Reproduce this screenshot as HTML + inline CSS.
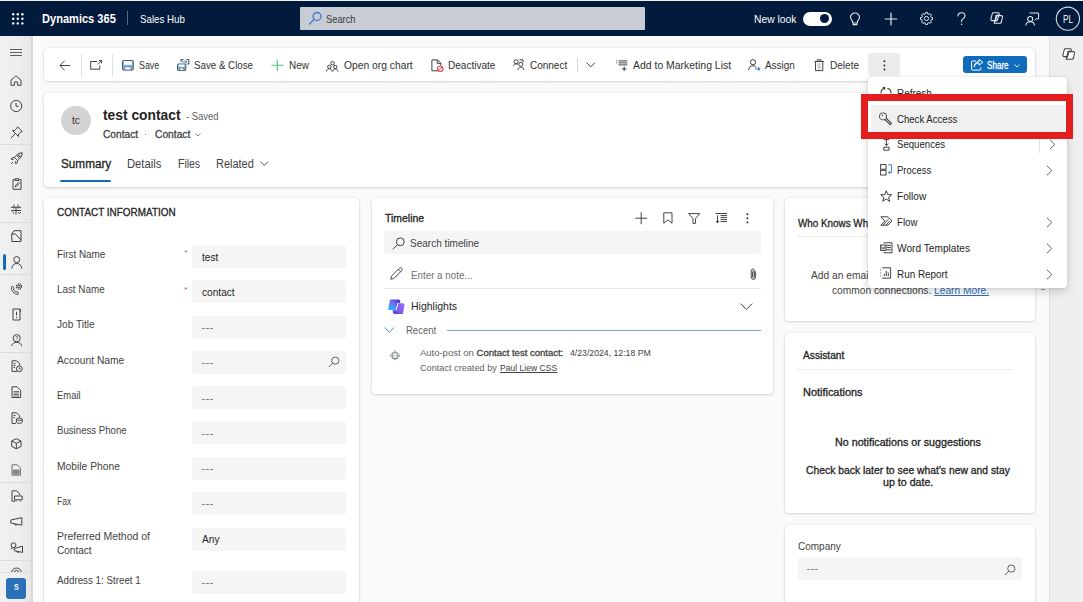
<!DOCTYPE html>
<html><head><meta charset="utf-8"><title>Dynamics 365 - Contact</title>
<style>
html,body{margin:0;padding:0;width:1083px;height:602px;overflow:hidden;background:#fafafa}
body{position:relative;font-family:"Liberation Sans",sans-serif}
.t{position:absolute;white-space:nowrap;line-height:1}
svg{overflow:visible}
</style></head><body>
<div style="position:absolute;left:0px;top:0px;width:1083px;height:602px;background:#fafafa"></div>
<div style="position:absolute;left:0px;top:0px;width:1083px;height:1px;background:#f0f0ee"></div>
<div style="position:absolute;left:0px;top:1px;width:1083px;height:35px;background:#021a3b"></div>
<div style="position:absolute;left:0px;top:36px;width:31px;height:566px;background:linear-gradient(90deg,#f0f0f0 0%,#efefef 55%,#e6e6e6 100%)"></div>
<div style="position:absolute;left:31px;top:36px;width:2px;height:566px;background:#d6d6d6"></div>
<div style="position:absolute;left:33px;top:36px;width:1px;height:566px;background:#ffffff"></div>
<div style="position:absolute;left:1050px;top:36px;width:33px;height:566px;background:#efefef"></div>
<div style="position:absolute;left:1049px;top:36px;width:1px;height:566px;background:#e0e0e0"></div>
<div style="position:absolute;left:44px;top:48px;width:991px;height:33px;background:#fff;border-radius:4px;box-shadow:0 0 2px rgba(0,0,0,0.12),0 1px 3px rgba(0,0,0,0.12)"></div>
<div style="position:absolute;left:44px;top:93px;width:1000px;height:94px;background:#fff;border-radius:4px;box-shadow:0 0 2px rgba(0,0,0,0.12),0 1px 3px rgba(0,0,0,0.12)"></div>
<div style="position:absolute;left:44px;top:198px;width:315px;height:420px;background:#fff;border-radius:4px;box-shadow:0 0 2px rgba(0,0,0,0.12),0 1px 3px rgba(0,0,0,0.12)"></div>
<div style="position:absolute;left:372px;top:198px;width:401px;height:196px;background:#fff;border-radius:4px;box-shadow:0 0 2px rgba(0,0,0,0.12),0 1px 3px rgba(0,0,0,0.12)"></div>
<div style="position:absolute;left:785px;top:198px;width:250px;height:123px;background:#fff;border-radius:4px;box-shadow:0 0 2px rgba(0,0,0,0.12),0 1px 3px rgba(0,0,0,0.12)"></div>
<div style="position:absolute;left:785px;top:333px;width:250px;height:180px;background:#fff;border-radius:4px;box-shadow:0 0 2px rgba(0,0,0,0.12),0 1px 3px rgba(0,0,0,0.12)"></div>
<div style="position:absolute;left:785px;top:525px;width:250px;height:100px;background:#fff;border-radius:4px;box-shadow:0 0 2px rgba(0,0,0,0.12),0 1px 3px rgba(0,0,0,0.12)"></div>
<svg style="position:absolute;left:12px;top:13px;" width="12" height="12" viewBox="0 0 12 12" fill="none"><circle cx="1.2" cy="1.2" r="1.2" fill="#fff"/><circle cx="1.2" cy="5.8" r="1.2" fill="#fff"/><circle cx="1.2" cy="10.4" r="1.2" fill="#fff"/><circle cx="5.8" cy="1.2" r="1.2" fill="#fff"/><circle cx="5.8" cy="5.8" r="1.2" fill="#fff"/><circle cx="5.8" cy="10.4" r="1.2" fill="#fff"/><circle cx="10.4" cy="1.2" r="1.2" fill="#fff"/><circle cx="10.4" cy="5.8" r="1.2" fill="#fff"/><circle cx="10.4" cy="10.4" r="1.2" fill="#fff"/></svg>
<div class="t" style="left:41.50px;top:13px;font-size:12px;font-weight:700;color:#fff;transform:scaleX(0.9219);transform-origin:0 0;">Dynamics 365</div>
<div style="position:absolute;left:127px;top:11px;width:1px;height:14px;background:#5a6a85"></div>
<div class="t" style="left:140.20px;top:14px;font-size:11px;font-weight:400;color:#fff;transform:scaleX(0.8827);transform-origin:0 0;">Sales Hub</div>
<div style="position:absolute;left:300px;top:7px;width:345px;height:23px;background:#c8ccd4;border-radius:1px"></div>
<svg style="position:absolute;left:308px;top:11px;" width="14" height="14" viewBox="0 0 14 14" fill="none"><circle cx="9" cy="5.5" r="4" stroke="#3f7fd0" stroke-width="1.3"/><path d="M6.2 8.3 L1.5 13" stroke="#3f7fd0" stroke-width="1.3" stroke-linecap="round"/></svg>
<div class="t" style="left:326.20px;top:14px;font-size:11px;font-weight:400;color:#3b3b3b;transform:scaleX(0.8465);transform-origin:0 0;">Search</div>
<div class="t" style="left:753.90px;top:14px;font-size:11px;font-weight:400;color:#fff;transform:scaleX(0.9367);transform-origin:0 0;">New look</div>
<div style="position:absolute;left:803px;top:12px;width:28.5px;height:13.5px;background:#fff;border-radius:7px"></div>
<div style="position:absolute;left:820px;top:14.2px;width:9px;height:9px;background:#021a3b;border-radius:50%"></div>
<svg style="position:absolute;left:849px;top:12px;" width="12" height="14" viewBox="0 0 12 14" fill="none"><path d="M6 1 C3.2 1 1.5 3 1.5 5.3 C1.5 7 2.5 8 3.5 9.2 L3.8 11 L8.2 11 L8.5 9.2 C9.5 8 10.5 7 10.5 5.3 C10.5 3 8.8 1 6 1 Z" stroke="#e8e8ec" stroke-width="1.1"/><path d="M4 11.3 L4.2 12.6 L7.8 12.6 L8 11.3" stroke="#e8e8ec" stroke-width="1.1"/></svg>
<svg style="position:absolute;left:884px;top:12px;" width="14" height="14" viewBox="0 0 14 14" fill="none"><path d="M7 0.8 V13.2 M0.8 7 H13.2" stroke="#e8e8ec" stroke-width="1.2"/></svg>
<svg style="position:absolute;left:919.5px;top:12px;" width="13" height="13" viewBox="0 0 13 13" fill="none"><polygon points="10.90,5.16 12.52,5.55 12.52,7.45 10.90,7.84 10.56,8.66 11.44,10.09 10.09,11.44 8.66,10.56 7.84,10.90 7.45,12.52 5.55,12.52 5.16,10.90 4.34,10.56 2.91,11.44 1.56,10.09 2.44,8.66 2.10,7.84 0.48,7.45 0.48,5.55 2.10,5.16 2.44,4.34 1.56,2.91 2.91,1.56 4.34,2.44 5.16,2.10 5.55,0.48 7.45,0.48 7.84,2.10 8.66,2.44 10.09,1.56 11.44,2.91 10.56,4.34" stroke="#e8e8ec" stroke-width="1" stroke-linejoin="round"/><circle cx="6.5" cy="6.5" r="2.1" stroke="#e8e8ec" stroke-width="1"/></svg>
<svg style="position:absolute;left:956px;top:12px;" width="11" height="14" viewBox="0 0 11 14" fill="none"><path d="M2 4 C2 1.8 3.8 0.8 5.5 0.8 C7.4 0.8 9 2 9 3.8 C9 5.6 7.6 6.2 6.5 7.2 C5.8 7.8 5.6 8.5 5.6 9.6" stroke="#e8e8ec" stroke-width="1.1" stroke-linecap="round"/><circle cx="5.6" cy="12.2" r="0.8" fill="#e8e8ec"/></svg>
<svg style="position:absolute;left:990.2px;top:12px;" width="14" height="13" viewBox="0 0 14 13" fill="none"><path d="M3.2 0.8 H8.3 C9 0.8 9.4 1.4 9.2 2 L7.2 8.6 H2 C1.2 8.6 0.7 8 0.9 7.2 L2.3 1.6 C2.4 1.1 2.8 0.8 3.2 0.8 Z" stroke="#e8e8ec" stroke-width="1.05" fill="none"/><path d="M6 3.6 H11.4 C12.2 3.6 12.7 4.2 12.5 5 L11.4 10 C11.2 10.7 10.7 11.2 10 11.2 H4.3 L6 3.6 Z" stroke="#e8e8ec" stroke-width="1.05" fill="none"/><path d="M7.3 2.5 L5.3 9.8" stroke="#e8e8ec" stroke-width="1"/></svg>
<svg style="position:absolute;left:1025px;top:12px;" width="15" height="14" viewBox="0 0 15 14" fill="none"><path d="M4.6 1 H13.6 V6.8 H11.2 L9.6 8.4" stroke="#e8e8ec" stroke-width="1"/><circle cx="5.2" cy="7" r="2.5" stroke="#e8e8ec" stroke-width="1.05"/><path d="M1 13.5 C1 11 2.8 9.8 5.2 9.8 C7.6 9.8 9.4 11 9.4 13.5" stroke="#e8e8ec" stroke-width="1.05"/></svg>
<svg style="position:absolute;left:1055px;top:6px;" width="26" height="26" viewBox="0 0 26 26" fill="none"><circle cx="12.9" cy="12.7" r="11.6" stroke="#d8dbe2" stroke-width="1.1"/></svg>
<div class="t" style="left:1062.80px;top:14px;font-size:11px;font-weight:400;color:#fff;transform:scaleX(0.7433);transform-origin:0 0;">PL</div>
<svg style="position:absolute;left:10px;top:48px;" width="12" height="9" viewBox="0 0 12 9" fill="none"><path d="M0 1.5 H12 M0 4.5 H12 M0 7.5 H12" stroke="#616161" stroke-width="1"/></svg>
<svg style="position:absolute;left:10px;top:74.5px;" width="12" height="11" viewBox="0 0 12 11" fill="none"><path d="M1 5 L6 0.8 L11 5 V10.3 H7.6 V7 H4.4 V10.3 H1 Z" stroke="#424242" stroke-width="1" fill="none"/></svg>
<svg style="position:absolute;left:10px;top:99.8px;" width="13" height="13" viewBox="0 0 13 13" fill="none"><circle cx="6.2" cy="6" r="5.6" stroke="#424242" stroke-width="1" fill="none"/><path d="M6 2.8 V6.3 H8.6" stroke="#424242" stroke-width="1" fill="none"/></svg>
<svg style="position:absolute;left:9.5px;top:125.5px;" width="13" height="13" viewBox="0 0 13 13" fill="none"><path d="M7.5 0.8 L12.2 5.5 L10.8 6 L8.5 8.3 L8.5 10.5 L2.5 4.5 L4.7 4.5 L7 2.2 Z M5.2 7.8 L0.8 12.2" stroke="#424242" stroke-width="1" fill="none"/></svg>
<div style="position:absolute;left:0px;top:144px;width:31px;height:1px;background:#dcdcdc"></div>
<svg style="position:absolute;left:9.5px;top:151.5px;" width="13" height="13" viewBox="0 0 13 13" fill="none"><path d="M12.2 0.8 C9 0.8 6.5 2.5 4.5 5.5 L7.5 8.5 C10.5 6.5 12.2 4 12.2 0.8 Z" stroke="#424242" stroke-width="1" fill="none"/><circle cx="8.8" cy="4.2" r="1.1" stroke="#424242" stroke-width="1" fill="none"/><path d="M4.5 5.5 L2.2 5.8 L1.2 7.2 L3.6 7.6 M7.5 8.5 L7.2 10.8 L5.8 11.8 L5.4 9.4 M3 10 L1 12" stroke="#424242" stroke-width="1" fill="none"/></svg>
<svg style="position:absolute;left:11.5px;top:178px;" width="10" height="12" viewBox="0 0 10 12" fill="none"><path d="M2.5 1.5 H1 V11.3 H9 V1.5 H7.5 M3 0.7 H7 V2.5 H3 Z M3.3 9 L3.6 7.3 L6.6 4.3 L7.6 5.3 L4.6 8.3 Z" stroke="#424242" stroke-width="1" fill="none"/></svg>
<svg style="position:absolute;left:10px;top:204px;" width="12" height="11" viewBox="0 0 12 11" fill="none"><path d="M1 3.3 H11 M1 6.5 H11 M4 0.7 V4.5 M8 0.7 V4.5 M6 4 V10.5 M2.5 8 L4.2 9.6 M8 8.5 L9.5 9.5 L11 8" stroke="#424242" stroke-width="1" fill="none"/></svg>
<div style="position:absolute;left:0px;top:222px;width:31px;height:1px;background:#dcdcdc"></div>
<svg style="position:absolute;left:10.5px;top:229.8px;" width="12" height="12.5" viewBox="0 0 12 12.5" fill="none"><path d="M3 0.7 H10 V11.5 H0.8 V4 L4.5 4 L10 10" stroke="#424242" stroke-width="1" fill="none"/><path d="M0.8 4 L3 0.7" stroke="#424242" stroke-width="1" fill="none"/></svg>
<div style="position:absolute;left:3.3px;top:254px;width:2.5px;height:15.5px;background:#0f6cbd;border-radius:2px"></div>
<svg style="position:absolute;left:10.5px;top:255.5px;" width="12" height="13" viewBox="0 0 12 13" fill="none"><circle cx="5.7" cy="3.6" r="3" stroke="#424242" stroke-width="1" fill="none"/><path d="M0.8 12.5 C1.2 9 3 7.5 5.7 7.5 C8.4 7.5 10.2 9 10.8 12.5" stroke="#424242" stroke-width="1" fill="none"/></svg>
<div style="position:absolute;left:0px;top:274px;width:31px;height:1px;background:#dcdcdc"></div>
<svg style="position:absolute;left:10px;top:283px;" width="13" height="12" viewBox="0 0 13 12" fill="none"><path d="M2.2 3 C0.4 4.5 1.5 8 4 10 C6 11.6 8 11.8 8.8 10.6 L7.2 8.6 L6 9.2 C4.8 8.4 3.8 7.2 3.4 6 L4.2 5 Z" stroke="#424242" stroke-width="1" fill="none"/><circle cx="9" cy="3.5" r="1.3" stroke="#424242" stroke-width="1" fill="none"/><circle cx="9" cy="3.5" r="2.6" stroke="#424242" stroke-width="1.3" stroke-dasharray="1.2 0.9" fill="none"/></svg>
<svg style="position:absolute;left:11.5px;top:307.5px;" width="10.5" height="13" viewBox="0 0 10.5 13" fill="none"><path d="M1 1 H8 V12 H1 Z M8.5 1 V3.8" stroke="#424242" stroke-width="1" fill="none"/><path d="M4.5 3.8 V7.6 M4.5 9 V10" stroke="#424242" stroke-width="1" fill="none"/></svg>
<svg style="position:absolute;left:10.5px;top:334px;" width="12" height="12.5" viewBox="0 0 12 12.5" fill="none"><circle cx="5.7" cy="4.2" r="3.6" stroke="#424242" stroke-width="1" fill="none"/><path d="M0.8 12 C1.3 9.5 3 8.3 5.7 8.3 C8.4 8.3 10.1 9.5 10.6 12" stroke="#424242" stroke-width="1" fill="none"/><path d="M4.6 3.2 C4.8 2.2 6.8 2.2 6.8 3.4 C6.8 4.2 5.7 4.4 5.7 5.4" stroke="#424242" stroke-width="0.8" fill="none"/></svg>
<div style="position:absolute;left:0px;top:352px;width:31px;height:1px;background:#dcdcdc"></div>
<svg style="position:absolute;left:10.5px;top:360.3px;" width="12" height="12.5" viewBox="0 0 12 12.5" fill="none"><path d="M6 11.4 H1 V0.8 H5.6 L8.6 3.8 V5.5" stroke="#424242" stroke-width="1" fill="none"/><circle cx="8.3" cy="8.8" r="2.9" stroke="#424242" stroke-width="1" fill="none"/><path d="M2.5 3.5 H4.5 M2.5 5.5 H4.5 M2.5 7.5 H4 M8.3 7.5 V9 H9.5" stroke="#424242" stroke-width="1" fill="none"/></svg>
<svg style="position:absolute;left:11px;top:385.8px;" width="10.5" height="12.5" viewBox="0 0 10.5 12.5" fill="none"><path d="M1 0.8 H6 L9.6 4.4 V11.5 H1 Z" stroke="#424242" stroke-width="1" fill="none"/><path d="M2.5 5.5 H8 M2.5 7 H8 M2.5 8.5 H8 M2.5 10 H8" stroke="#616161" stroke-width="0.9"/></svg>
<svg style="position:absolute;left:10.5px;top:411.5px;" width="12" height="12.5" viewBox="0 0 12 12.5" fill="none"><path d="M5 11.4 H1 V0.8 H5.6 L8.6 3.8 V5.5" stroke="#424242" stroke-width="1" fill="none"/><ellipse cx="8.3" cy="7.2" rx="2.9" ry="1.2" stroke="#424242" stroke-width="1" fill="none"/><path d="M5.4 7.2 V10.2 C5.4 11.6 11.2 11.6 11.2 10.2 V7.2" stroke="#424242" stroke-width="1" fill="none"/><path d="M2.5 3.5 H4.5 M2.5 5.5 H4" stroke="#424242" stroke-width="1" fill="none"/></svg>
<svg style="position:absolute;left:10.5px;top:437.8px;" width="11" height="11.5" viewBox="0 0 11 11.5" fill="none"><path d="M5.3 0.7 L10 3 V8.5 L5.3 10.8 L0.7 8.5 V3 Z M0.7 3 L5.3 5.3 L10 3 M5.3 5.3 V10.8" stroke="#424242" stroke-width="1" fill="none"/></svg>
<svg style="position:absolute;left:11px;top:463.5px;" width="10.5" height="12" viewBox="0 0 10.5 12" fill="none"><path d="M1 0.8 H6 L9.4 4 V11.2 H1 Z" stroke="#6e6e6e" stroke-width="1" fill="none"/><path d="M2.5 6 H8 V10 H2.5 Z M5 6 V10 M2.5 8 H8" stroke="#6e6e6e" stroke-width="0.9" fill="#b8b8b8"/></svg>
<div style="position:absolute;left:0px;top:482px;width:31px;height:1px;background:#dcdcdc"></div>
<svg style="position:absolute;left:10.5px;top:489.7px;" width="12" height="12.5" viewBox="0 0 12 12.5" fill="none"><path d="M4 11.2 H1 V0.8 H5.6 L8.6 3.8 V5" stroke="#424242" stroke-width="1" fill="none"/><path d="M3.5 6 H11.2 V9.8 H3.5 Z M5 10.5 V11.6 M9.6 10.5 V11.6" stroke="#424242" stroke-width="1" fill="none"/></svg>
<svg style="position:absolute;left:9.8px;top:517px;" width="13" height="9.5" viewBox="0 0 13 9.5" fill="none"><path d="M0.8 3 L11.8 0.7 V8.2 L0.8 6 Z M4.5 6.8 C4.5 8.5 7 8.5 7 7.3" stroke="#424242" stroke-width="1" fill="none"/></svg>
<svg style="position:absolute;left:9.5px;top:541.8px;" width="13.5" height="11.5" viewBox="0 0 13.5 11.5" fill="none"><circle cx="3.5" cy="3.2" r="2.4" stroke="#424242" stroke-width="1" fill="none"/><path d="M0.8 7.5 C1 6.3 2 5.8 3.5 5.8 M4.2 6.5 L12.5 4.2 V10.4 L4.2 8.7 Z M6.5 9.2 C6.5 10.8 9 10.8 9 9.6" stroke="#424242" stroke-width="1" fill="none"/></svg>
<div style="position:absolute;left:0px;top:560px;width:31px;height:1px;background:#dcdcdc"></div>
<svg style="position:absolute;left:10.5px;top:567px;" width="11" height="5" viewBox="0 0 11 5" fill="none"><circle cx="5.5" cy="6" r="5" stroke="#424242" stroke-width="1" fill="none"/><circle cx="5.5" cy="6" r="2.6" stroke="#424242" stroke-width="1" fill="none"/></svg>
<div style="position:absolute;left:0px;top:572px;width:31px;height:30px;background:linear-gradient(90deg,#f0f0f0 0%,#efefef 55%,#e6e6e6 100%);border-top:1px solid #e0e0e0;box-sizing:border-box"></div>
<div style="position:absolute;left:6px;top:578px;width:19.8px;height:20.5px;background:#2b70b7;border-radius:3px"></div>
<div class="t" style="left:13.80px;top:582px;font-size:9.5px;font-weight:700;color:#fff;transform:scaleX(0.7417);transform-origin:0 0;">S</div>
<svg style="position:absolute;left:59px;top:59.5px;" width="12" height="11" viewBox="0 0 12 11" fill="none"><path d="M11.2 5.5 H1 M5.6 0.8 L0.9 5.5 L5.6 10.2" stroke="#424242" stroke-width="1" fill="none"/></svg>
<div style="position:absolute;left:80.5px;top:53.5px;width:1px;height:23px;background:#e0e0e0"></div>
<svg style="position:absolute;left:90px;top:60px;" width="13" height="10" viewBox="0 0 13 10" fill="none"><path d="M7 1.5 H0.7 V9.2 H9.8 V5.5 M8.8 0.6 H11.6 V3.4 M11.5 0.7 L7.8 4.4" stroke="#424242" stroke-width="1" fill="none"/></svg>
<div style="position:absolute;left:112px;top:53.5px;width:1px;height:23px;background:#e0e0e0"></div>
<svg style="position:absolute;left:121.5px;top:59.8px;" width="12" height="10.5" viewBox="0 0 12 10.5" fill="none"><rect x="0.5" y="0.5" width="10.8" height="9.5" rx="0.8" fill="#7ab6ea" stroke="#4a5a6a" stroke-width="1"/><rect x="2" y="1" width="7.8" height="3.8" fill="#fff"/><rect x="2.8" y="6.8" width="6.2" height="3.2" fill="#f4f4f4" stroke="#4a5a6a" stroke-width="0.6"/></svg>
<div class="t" style="left:138.80px;top:60px;font-size:11px;font-weight:400;color:#303030;transform:scaleX(0.8018);transform-origin:0 0;">Save</div>
<svg style="position:absolute;left:176.8px;top:59px;" width="12.5" height="12" viewBox="0 0 12.5 12" fill="none"><path d="M6.5 0.6 H4 V3 M9.5 0.6 H11.8 V5 H10.2" stroke="#3a3a3a" stroke-width="1" fill="none"/><path d="M5.4 2.9 H9.6 M8.2 1.5 L9.8 2.9 L8.2 4.3" stroke="#2f7fd0" stroke-width="1" fill="none"/><rect x="0.5" y="5" width="8.3" height="6.5" rx="0.7" fill="#7ab6ea" stroke="#4a5a6a" stroke-width="1"/><rect x="1.8" y="5.5" width="5.6" height="2.3" fill="#fff"/><rect x="2.3" y="9" width="4.6" height="2.3" fill="#f0f0f0" stroke="#4a5a6a" stroke-width="0.6"/></svg>
<div class="t" style="left:194.00px;top:60px;font-size:11px;font-weight:400;color:#303030;transform:scaleX(0.8852);transform-origin:0 0;">Save &amp; Close</div>
<svg style="position:absolute;left:270.5px;top:59px;" width="13" height="12.5" viewBox="0 0 13 12.5" fill="none"><path d="M6.3 0.5 V12 M0.5 6.2 H12.5" stroke="#4cc27e" stroke-width="1.1"/></svg>
<div class="t" style="left:288.70px;top:60px;font-size:11px;font-weight:400;color:#303030;transform:scaleX(0.9032);transform-origin:0 0;">New</div>
<svg style="position:absolute;left:326px;top:60.5px;" width="12.5" height="10.8" viewBox="0 0 12.5 10.8" fill="none"><circle cx="6.5" cy="2.2" r="1.7" stroke="#424242" stroke-width="1" fill="none"/><circle cx="3.3" cy="5.8" r="1.7" stroke="#424242" stroke-width="1" fill="none"/><circle cx="9.3" cy="6" r="1.7" stroke="#424242" stroke-width="1" fill="none"/><path d="M0.5 10.5 C1 8.5 2 7.8 3.3 7.8 C4.6 7.8 5.6 8.5 6 10.5 M6.8 10.5 C7.2 8.5 8 8 9.3 8 C10.6 8 11.6 8.7 12 10.5 M4.6 4.6 L5.2 3.6 M7.8 3.6 L8.4 4.7" stroke="#424242" stroke-width="1" fill="none"/></svg>
<div class="t" style="left:343.60px;top:60px;font-size:11px;font-weight:400;color:#303030;transform:scaleX(0.9364);transform-origin:0 0;">Open org chart</div>
<svg style="position:absolute;left:430.5px;top:58.5px;" width="13" height="13" viewBox="0 0 13 13" fill="none"><path d="M8 11.8 H0.9 V0.9 H6.5 L9.8 4.2 V6.8 M6.3 0.9 V4.4 H9.8" stroke="#424242" stroke-width="1" fill="none"/><circle cx="9.2" cy="9.7" r="2.7" fill="#fff" stroke="#e34850" stroke-width="1.2"/><path d="M7.4 11.4 L11 8" stroke="#e34850" stroke-width="1"/></svg>
<div class="t" style="left:447.50px;top:60px;font-size:11px;font-weight:400;color:#303030;transform:scaleX(0.9120);transform-origin:0 0;">Deactivate</div>
<svg style="position:absolute;left:513.3px;top:59.3px;" width="11" height="11.5" viewBox="0 0 11 11.5" fill="none"><circle cx="3.2" cy="2.7" r="2" stroke="#424242" stroke-width="1" fill="none"/><path d="M0.5 6.8 C0.8 5.5 1.8 5 3.2 5 C4 5 4.6 5.2 5 5.6" stroke="#424242" stroke-width="1" fill="none"/><circle cx="7.8" cy="5.3" r="2" stroke="#424242" stroke-width="1" fill="none"/><path d="M4.8 11 C5 9 6.2 8.2 7.8 8.2 C9.4 8.2 10.6 9 10.8 11 M6.5 0.8 H10 V3.3" stroke="#424242" stroke-width="1" fill="none"/></svg>
<div class="t" style="left:529.90px;top:60px;font-size:11px;font-weight:400;color:#303030;transform:scaleX(0.9079);transform-origin:0 0;">Connect</div>
<div style="position:absolute;left:576.5px;top:58px;width:1px;height:13.5px;background:#d6d6d6"></div>
<svg style="position:absolute;left:585.5px;top:62px;" width="9.5" height="6" viewBox="0 0 9.5 6" fill="none"><path d="M0.6 0.6 L4.75 4.9 L8.9 0.6" stroke="#424242" stroke-width="1" fill="none"/></svg>
<svg style="position:absolute;left:615.8px;top:60px;" width="12" height="11.5" viewBox="0 0 12 11.5" fill="none"><path d="M0.3 0.9 H1.2 M0.3 2.9 H1.2 M2.5 0.9 H11.3 M2.5 2.9 H11.3 M2.5 4.9 H11.3 M8.2 6.5 V11.2 M5.9 8.9 H10.6" stroke="#424242" stroke-width="1" fill="none"/></svg>
<div class="t" style="left:632.60px;top:60px;font-size:11px;font-weight:400;color:#303030;transform:scaleX(0.9493);transform-origin:0 0;">Add to Marketing List</div>
<svg style="position:absolute;left:747.8px;top:58.8px;" width="13" height="12" viewBox="0 0 13 12" fill="none"><circle cx="5" cy="3.2" r="2.6" stroke="#424242" stroke-width="1" fill="none"/><path d="M0.6 11 C1 8 2.6 6.8 5 6.8 C6.5 6.8 7.6 7.4 8.3 8.6" stroke="#424242" stroke-width="1" fill="none"/><path d="M6.8 10 H11.8 M10.1 8.4 L11.9 10 L10.1 11.6" stroke="#2f7fd0" stroke-width="1.1"/></svg>
<div class="t" style="left:765.30px;top:60px;font-size:11px;font-weight:400;color:#303030;transform:scaleX(0.9027);transform-origin:0 0;">Assign</div>
<svg style="position:absolute;left:813.5px;top:59px;" width="10.5" height="12.5" viewBox="0 0 10.5 12.5" fill="none"><path d="M0.5 2.5 H9.8 M3.3 2.3 V0.8 H7 V2.3 M1.5 2.5 V11.6 H8.8 V2.5" stroke="#424242" stroke-width="1" fill="none"/><rect x="3.5" y="4" width="3.3" height="6.3" fill="#d0d0d0"/></svg>
<div class="t" style="left:830.00px;top:60px;font-size:11px;font-weight:400;color:#303030;transform:scaleX(0.9151);transform-origin:0 0;">Delete</div>
<div style="position:absolute;left:868.2px;top:53.3px;width:32px;height:23px;background:#ebebeb;border-radius:3px"></div>
<svg style="position:absolute;left:883px;top:59.5px;" width="3" height="11" viewBox="0 0 3 11" fill="none"><circle cx="1.4" cy="1.3" r="0.95" fill="#242424"/><circle cx="1.4" cy="5.4" r="0.95" fill="#242424"/><circle cx="1.4" cy="9.5" r="0.95" fill="#242424"/></svg>
<div style="position:absolute;left:963px;top:56.4px;width:64.2px;height:17px;background:#0f6cbd;border-radius:3px"></div>
<svg style="position:absolute;left:970.5px;top:59px;" width="13" height="12" viewBox="0 0 13 12" fill="none"><path d="M5 2 H1.5 C1 2 0.6 2.4 0.6 2.9 V10.2 C0.6 10.7 1 11.1 1.5 11.1 H9 C9.5 11.1 9.9 10.7 9.9 10.2 V8.5 M3.2 8 C3.5 5.5 5.4 4 8 4 V6.2 L11.9 3.3 L8 0.5 V2.5 C5 2.5 3.2 5 3.2 8 Z" stroke="#fff" stroke-width="1" fill="none" stroke-linejoin="round"/></svg>
<div class="t" style="left:987.00px;top:60px;font-size:10.5px;font-weight:400;color:#fff;transform:scaleX(0.7710);transform-origin:0 0;-webkit-text-stroke:0.3px #fff;">Share</div>
<svg style="position:absolute;left:1013.8px;top:63.5px;" width="6" height="4" viewBox="0 0 6 4" fill="none"><path d="M0.5 0.5 L3 3 L5.5 0.5" stroke="#fff" stroke-width="0.9" fill="none"/></svg>
<svg style="position:absolute;left:1061.5px;top:48px;" width="14" height="13" viewBox="0 0 14 13" fill="none"><path d="M3.2 0.8 H8.3 C9 0.8 9.4 1.4 9.2 2 L7.2 8.6 H2 C1.2 8.6 0.7 8 0.9 7.2 L2.3 1.6 C2.4 1.1 2.8 0.8 3.2 0.8 Z" stroke="#424242" stroke-width="1.05" fill="#fff"/><path d="M6 3.6 H11.4 C12.2 3.6 12.7 4.2 12.5 5 L11.4 10 C11.2 10.7 10.7 11.2 10 11.2 H4.3 L6 3.6 Z" stroke="#424242" stroke-width="1.05" fill="#fff"/><path d="M7.3 2.5 L5.3 9.8" stroke="#424242" stroke-width="1"/></svg>
<div style="position:absolute;left:61px;top:105.5px;width:29.8px;height:29.5px;background:#d6d4d2;border-radius:50%"></div>
<div class="t" style="left:72.00px;top:115px;font-size:11px;font-weight:400;color:#323130;transform:scaleX(0.9114);transform-origin:0 0;">tc</div>
<div class="t" style="left:102.60px;top:108px;font-size:14px;font-weight:700;color:#242424;transform:scaleX(0.9864);transform-origin:0 0;">test contact</div>
<div class="t" style="left:185.80px;top:112px;font-size:10px;font-weight:400;color:#616161;transform:scaleX(0.9431);transform-origin:0 0;">- Saved</div>
<div class="t" style="left:102.60px;top:129px;font-size:11px;font-weight:400;color:#424242;transform:scaleX(0.9260);transform-origin:0 0;-webkit-text-stroke:0.3px #424242;">Contact</div>
<div style="position:absolute;left:144.8px;top:134px;width:1.3px;height:1.3px;background:#616161;border-radius:50%"></div>
<div class="t" style="left:155.00px;top:129px;font-size:11px;font-weight:400;color:#424242;transform:scaleX(0.9313);transform-origin:0 0;-webkit-text-stroke:0.3px #424242;">Contact</div>
<svg style="position:absolute;left:195.3px;top:133.3px;" width="6" height="4" viewBox="0 0 6 4" fill="none"><path d="M0.5 0.5 L3 3 L5.5 0.5" stroke="#616161" stroke-width="0.8" fill="none"/></svg>
<div class="t" style="left:60.70px;top:158px;font-size:12px;font-weight:400;color:#242424;transform:scaleX(0.9779);transform-origin:0 0;-webkit-text-stroke:0.3px #242424;">Summary</div>
<div class="t" style="left:126.70px;top:158px;font-size:12px;font-weight:400;color:#424242;transform:scaleX(0.9350);transform-origin:0 0;">Details</div>
<div class="t" style="left:177.50px;top:158px;font-size:12px;font-weight:400;color:#424242;transform:scaleX(0.8724);transform-origin:0 0;">Files</div>
<div class="t" style="left:215.90px;top:158px;font-size:12px;font-weight:400;color:#424242;transform:scaleX(0.9138);transform-origin:0 0;">Related</div>
<svg style="position:absolute;left:260.3px;top:160.5px;" width="8.5" height="5.5" viewBox="0 0 8.5 5.5" fill="none"><path d="M0.5 0.6 L4.25 4.5 L8 0.6" stroke="#424242" stroke-width="0.9" fill="none"/></svg>
<div style="position:absolute;left:60.2px;top:179.5px;width:51.2px;height:2.6px;background:#0f6cbd;border-radius:2px"></div>
<div class="t" style="left:56.90px;top:207px;font-size:11px;font-weight:400;color:#242424;transform:scaleX(0.9027);transform-origin:0 0;-webkit-text-stroke:0.3px #242424;">CONTACT INFORMATION</div>
<div style="position:absolute;left:192.2px;top:245.0px;width:153.8px;height:23.2px;background:#f5f5f5;border-radius:3px"></div>
<div class="t" style="left:57.00px;top:249px;font-size:11px;font-weight:400;color:#424242;transform:scaleX(0.8981);transform-origin:0 0;">First Name</div>
<div class="t" style="left:201.90px;top:252px;font-size:11px;font-weight:400;color:#242424;transform:scaleX(0.9200);transform-origin:0 0;">test</div>
<div style="position:absolute;left:192.2px;top:280.1px;width:153.8px;height:23.2px;background:#f5f5f5;border-radius:3px"></div>
<div class="t" style="left:57.00px;top:284px;font-size:11px;font-weight:400;color:#424242;transform:scaleX(0.8950);transform-origin:0 0;">Last Name</div>
<div class="t" style="left:201.90px;top:287px;font-size:11px;font-weight:400;color:#242424;transform:scaleX(0.9200);transform-origin:0 0;">contact</div>
<div style="position:absolute;left:192.2px;top:315.6px;width:153.8px;height:23.2px;background:#f5f5f5;border-radius:3px"></div>
<div class="t" style="left:57.00px;top:319px;font-size:11px;font-weight:400;color:#424242;transform:scaleX(0.9179);transform-origin:0 0;">Job Title</div>
<div style="position:absolute;left:202px;top:328px;width:3px;height:1px;background:#8a8a8a"></div>
<div style="position:absolute;left:206px;top:328px;width:3px;height:1px;background:#8a8a8a"></div>
<div style="position:absolute;left:210px;top:328px;width:3px;height:1px;background:#8a8a8a"></div>
<div style="position:absolute;left:192.2px;top:350.8px;width:153.8px;height:23.2px;background:#f5f5f5;border-radius:3px"></div>
<div class="t" style="left:57.00px;top:355px;font-size:11px;font-weight:400;color:#424242;transform:scaleX(0.9328);transform-origin:0 0;">Account Name</div>
<div style="position:absolute;left:202px;top:363px;width:3px;height:1px;background:#8a8a8a"></div>
<div style="position:absolute;left:206px;top:363px;width:3px;height:1px;background:#8a8a8a"></div>
<div style="position:absolute;left:210px;top:363px;width:3px;height:1px;background:#8a8a8a"></div>
<svg style="position:absolute;left:328.3px;top:356.3px;" width="12" height="12" viewBox="0 0 12 12" fill="none"><circle cx="7.3" cy="4.6" r="3.6" stroke="#616161" stroke-width="1" fill="none"/><path d="M4.7 7.2 L0.8 11.1" stroke="#616161" stroke-width="1"/></svg>
<div style="position:absolute;left:192.2px;top:386.3px;width:153.8px;height:23.2px;background:#f5f5f5;border-radius:3px"></div>
<div class="t" style="left:57.00px;top:390px;font-size:11px;font-weight:400;color:#424242;transform:scaleX(0.8578);transform-origin:0 0;">Email</div>
<div style="position:absolute;left:202px;top:399px;width:3px;height:1px;background:#8a8a8a"></div>
<div style="position:absolute;left:206px;top:399px;width:3px;height:1px;background:#8a8a8a"></div>
<div style="position:absolute;left:210px;top:399px;width:3px;height:1px;background:#8a8a8a"></div>
<div style="position:absolute;left:192.2px;top:421.3px;width:153.8px;height:23.2px;background:#f5f5f5;border-radius:3px"></div>
<div class="t" style="left:57.00px;top:425px;font-size:11px;font-weight:400;color:#424242;transform:scaleX(0.8768);transform-origin:0 0;">Business Phone</div>
<div style="position:absolute;left:202px;top:434px;width:3px;height:1px;background:#8a8a8a"></div>
<div style="position:absolute;left:206px;top:434px;width:3px;height:1px;background:#8a8a8a"></div>
<div style="position:absolute;left:210px;top:434px;width:3px;height:1px;background:#8a8a8a"></div>
<div style="position:absolute;left:192.2px;top:456.7px;width:153.8px;height:23.2px;background:#f5f5f5;border-radius:3px"></div>
<div class="t" style="left:57.00px;top:461px;font-size:11px;font-weight:400;color:#424242;transform:scaleX(0.9366);transform-origin:0 0;">Mobile Phone</div>
<div style="position:absolute;left:202px;top:469px;width:3px;height:1px;background:#8a8a8a"></div>
<div style="position:absolute;left:206px;top:469px;width:3px;height:1px;background:#8a8a8a"></div>
<div style="position:absolute;left:210px;top:469px;width:3px;height:1px;background:#8a8a8a"></div>
<div style="position:absolute;left:192.2px;top:491.7px;width:153.8px;height:23.2px;background:#f5f5f5;border-radius:3px"></div>
<div class="t" style="left:57.00px;top:496px;font-size:11px;font-weight:400;color:#424242;transform:scaleX(0.7798);transform-origin:0 0;">Fax</div>
<div style="position:absolute;left:202px;top:504px;width:3px;height:1px;background:#8a8a8a"></div>
<div style="position:absolute;left:206px;top:504px;width:3px;height:1px;background:#8a8a8a"></div>
<div style="position:absolute;left:210px;top:504px;width:3px;height:1px;background:#8a8a8a"></div>
<div style="position:absolute;left:192.2px;top:527.5px;width:153.8px;height:23.2px;background:#f5f5f5;border-radius:3px"></div>
<div class="t" style="left:57.00px;top:531px;font-size:11px;font-weight:400;color:#424242;transform:scaleX(0.9494);transform-origin:0 0;">Preferred Method of</div>
<div class="t" style="left:57.00px;top:545px;font-size:11px;font-weight:400;color:#424242;transform:scaleX(0.9128);transform-origin:0 0;">Contact</div>
<div class="t" style="left:201.90px;top:534px;font-size:11px;font-weight:400;color:#242424;transform:scaleX(0.9200);transform-origin:0 0;">Any</div>
<div style="position:absolute;left:192.2px;top:570.6px;width:153.8px;height:23.2px;background:#f5f5f5;border-radius:3px"></div>
<div class="t" style="left:57.00px;top:575px;font-size:11px;font-weight:400;color:#424242;transform:scaleX(0.8889);transform-origin:0 0;">Address 1: Street 1</div>
<div style="position:absolute;left:202px;top:583px;width:3px;height:1px;background:#8a8a8a"></div>
<div style="position:absolute;left:206px;top:583px;width:3px;height:1px;background:#8a8a8a"></div>
<div style="position:absolute;left:210px;top:583px;width:3px;height:1px;background:#8a8a8a"></div>
<div class="t" style="left:184.2px;top:249.20px;font-size:8px;font-weight:400;color:#2f7fd0;letter-spacing:0px;">*</div>
<div class="t" style="left:184.2px;top:285.70px;font-size:8px;font-weight:400;color:#d13438;letter-spacing:0px;">*</div>
<div class="t" style="left:384.60px;top:213px;font-size:11px;font-weight:400;color:#242424;transform:scaleX(0.9499);transform-origin:0 0;-webkit-text-stroke:0.3px #242424;">Timeline</div>
<svg style="position:absolute;left:635.3px;top:212px;" width="12.5" height="12.5" viewBox="0 0 12.5 12.5" fill="none"><path d="M6.2 0.3 V12.2 M0.3 6.2 H12.2" stroke="#424242" stroke-width="1" fill="none"/></svg>
<svg style="position:absolute;left:663.3px;top:211.7px;" width="10" height="12" viewBox="0 0 10 12" fill="none"><path d="M0.8 0.8 H9 V11.2 L4.9 8 L0.8 11.2 Z" stroke="#424242" stroke-width="1" fill="none"/></svg>
<svg style="position:absolute;left:688.3px;top:212.8px;" width="12.5" height="11" viewBox="0 0 12.5 11" fill="none"><path d="M0.6 0.6 H11.8 L7.4 5.6 V10.4 H5 V5.6 Z" stroke="#424242" stroke-width="1" fill="none"/></svg>
<svg style="position:absolute;left:714.8px;top:212.8px;" width="12.5" height="10.5" viewBox="0 0 12.5 10.5" fill="none"><path d="M0.6 0.5 H12 M2.5 2.3 V9.5 M1 8 L2.5 9.8 L4 8 M5.5 2.6 H12 M5.5 4.6 H12 M5.5 6.6 H12 M5.5 8.6 H12" stroke="#424242" stroke-width="1" fill="none"/></svg>
<svg style="position:absolute;left:746px;top:213px;" width="3" height="11" viewBox="0 0 3 11" fill="none"><circle cx="1.4" cy="1.2" r="0.95" fill="#242424"/><circle cx="1.4" cy="5.3" r="0.95" fill="#242424"/><circle cx="1.4" cy="9.4" r="0.95" fill="#242424"/></svg>
<div style="position:absolute;left:384px;top:231.2px;width:376.7px;height:22.6px;background:#f5f5f5;border-radius:2px"></div>
<svg style="position:absolute;left:392px;top:236.5px;" width="13" height="13" viewBox="0 0 13 13" fill="none"><circle cx="8.3" cy="4.8" r="3.9" stroke="#424242" stroke-width="1" fill="none"/><path d="M5.5 7.6 L0.8 12.3" stroke="#424242" stroke-width="1"/></svg>
<div class="t" style="left:409.90px;top:238px;font-size:11px;font-weight:400;color:#424242;transform:scaleX(0.9128);transform-origin:0 0;">Search timeline</div>
<svg style="position:absolute;left:389.5px;top:266.5px;" width="13" height="13" viewBox="0 0 13 13" fill="none"><path d="M0.8 12.2 L1.4 9.2 L9.3 1.3 C10 0.6 11 0.6 11.7 1.3 C12.4 2 12.4 3 11.7 3.7 L3.8 11.6 Z M8.3 2.3 L10.7 4.7" stroke="#424242" stroke-width="1" fill="none"/></svg>
<div class="t" style="left:410.80px;top:270px;font-size:11px;font-weight:400;color:#707070;transform:scaleX(0.8900);transform-origin:0 0;">Enter a note...</div>
<svg style="position:absolute;left:749.5px;top:267.5px;" width="7" height="12.5" viewBox="0 0 7 12.5" fill="none"><path d="M5.6 3.5 V9 C5.6 10.6 4.7 11.5 3.4 11.5 C2.1 11.5 1.2 10.6 1.2 9 V2.8 C1.2 1.7 1.9 1 2.8 1 C3.7 1 4.4 1.7 4.4 2.8 V8.6 C4.4 9.2 4 9.5 3.4 9.5 C2.8 9.5 2.5 9.2 2.5 8.6 V3.5" stroke="#424242" stroke-width="0.9" fill="#cfcfcf"/></svg>
<div style="position:absolute;left:384px;top:288px;width:376.7px;height:1px;background:#e6e6e6"></div>
<svg style="position:absolute;left:387.5px;top:298.5px;" width="17" height="15.5" viewBox="0 0 17 15.5" fill="none"><defs><linearGradient id="cg1" x1="0" y1="1" x2="0.8" y2="0"><stop offset="0" stop-color="#18c6f6"/><stop offset="0.6" stop-color="#6a70f0"/><stop offset="1" stop-color="#4a34c8"/></linearGradient><linearGradient id="cg2" x1="0" y1="1" x2="1" y2="0"><stop offset="0" stop-color="#4b2cc4"/><stop offset="0.4" stop-color="#7b5cf0"/><stop offset="1" stop-color="#9a6cf2"/></linearGradient></defs><path d="M3 0.4 H10.6 C11.7 0.4 12.5 1.2 12.3 2.3 L12 4.1 H9.6 L7.7 11 H0.9 C0.4 11 0.1 10.6 0.2 10.1 L1.9 1.5 C2.1 0.8 2.5 0.4 3 0.4 Z" fill="url(#cg1)"/><path d="M7 15 H13.9 C14.5 15 15 14.6 15.1 14 L16.4 6 C16.6 5 15.9 4.3 15 4.3 H10.4 L8.5 11.3 H4.6 L4.9 13.3 C5.1 14.3 5.9 15 7 15 Z" fill="url(#cg2)"/></svg>
<div class="t" style="left:410.80px;top:301px;font-size:11px;font-weight:400;color:#242424;transform:scaleX(0.9544);transform-origin:0 0;">Highlights</div>
<svg style="position:absolute;left:739.8px;top:302.5px;" width="13" height="7.5" viewBox="0 0 13 7.5" fill="none"><path d="M0.6 0.6 L6.4 6.4 L12.2 0.6" stroke="#424242" stroke-width="1" fill="none"/></svg>
<svg style="position:absolute;left:383.8px;top:326.5px;" width="11" height="6" viewBox="0 0 11 6" fill="none"><path d="M0.6 0.6 L5.3 5.2 L10 0.6" stroke="#4a8ad0" stroke-width="1" fill="none"/></svg>
<div class="t" style="left:405.90px;top:325px;font-size:11px;font-weight:400;color:#616161;transform:scaleX(0.8638);transform-origin:0 0;">Recent</div>
<div style="position:absolute;left:447px;top:329.5px;width:313.7px;height:1.5px;background:#7aa7d6"></div>
<svg style="position:absolute;left:390.3px;top:350px;" width="10" height="10.5" viewBox="0 0 10 10.5" fill="none"><path d="M5 0.3 V2.6 M2.2 2.9 H7.8 V8.4 H2.2 Z M0.7 4.6 V6.6 M9.3 4.6 V6.6 M4 8.6 L5 9.8 L6 8.6" stroke="#617578" stroke-width="0.9" fill="none"/><path d="M3.6 7.2 V4.8 L5 6.2 L6.4 4.8 V7.2" stroke="#8a9a9c" stroke-width="0.6" fill="none"/></svg>
<div class="t" style="left:419.90px;top:348px;font-size:9.5px;font-weight:400;color:#616161;">Auto-post on</div>
<div class="t" style="left:476.60px;top:348px;font-size:9.5px;font-weight:400;color:#424242;-webkit-text-stroke:0.3px #424242;">Contact test contact:</div>
<div class="t" style="left:569.60px;top:348px;font-size:9.5px;font-weight:400;color:#424242;transform:scaleX(0.9149);transform-origin:0 0;">4/23/2024, 12:18 PM</div>
<div class="t" style="left:419.90px;top:363px;font-size:9.5px;font-weight:400;color:#616161;transform:scaleX(0.9631);transform-origin:0 0;">Contact created by</div>
<div class="t" style="left:499.50px;top:363px;font-size:9.5px;font-weight:400;color:#424242;transform:scaleX(0.9027);transform-origin:0 0;"><u>Paul Liew CSS</u></div>
<div class="t" style="left:797.90px;top:218px;font-size:11px;font-weight:400;color:#242424;transform:scaleX(0.8960);transform-origin:0 0;-webkit-text-stroke:0.3px #242424;">Who Knows Whom</div>
<div style="position:absolute;left:797.2px;top:235.6px;width:226px;height:1px;background:#ececec"></div>
<div class="t" style="left:810.50px;top:270px;font-size:11px;font-weight:400;color:#424242;transform:scaleX(0.9300);transform-origin:0 0;">Add an email address to see your</div>
<div class="t" style="left:831.50px;top:285px;font-size:11px;font-weight:400;color:#424242;transform:scaleX(0.9276);transform-origin:0 0;">common connections. <u style="color:#2f6fb8">Learn More.</u></div>
<div class="t" style="left:803.00px;top:350px;font-size:10.5px;font-weight:400;color:#242424;transform:scaleX(0.9695);transform-origin:0 0;-webkit-text-stroke:0.3px #242424;">Assistant</div>
<div style="position:absolute;left:797.4px;top:369.3px;width:215.4px;height:1px;background:#ededed"></div>
<div class="t" style="left:803.00px;top:387px;font-size:10.5px;font-weight:400;color:#242424;transform:scaleX(1.0403);transform-origin:0 0;-webkit-text-stroke:0.3px #242424;">Notifications</div>
<div class="t" style="left:834.90px;top:437px;font-size:10.5px;font-weight:400;color:#242424;transform:scaleX(1.0203);transform-origin:0 0;-webkit-text-stroke:0.3px #242424;">No notifications or suggestions</div>
<div class="t" style="left:805.70px;top:465px;font-size:10.5px;font-weight:400;color:#242424;transform:scaleX(0.9857);transform-origin:0 0;-webkit-text-stroke:0.3px #242424;">Check back later to see what's new and stay</div>
<div class="t" style="left:882.70px;top:477px;font-size:10.5px;font-weight:400;color:#242424;transform:scaleX(1.0136);transform-origin:0 0;-webkit-text-stroke:0.3px #242424;">up to date.</div>
<div class="t" style="left:797.70px;top:541px;font-size:11px;font-weight:400;color:#424242;transform:scaleX(0.9091);transform-origin:0 0;">Company</div>
<div style="position:absolute;left:797.7px;top:557.2px;width:223.9px;height:23.1px;background:#f5f5f5;border-radius:3px"></div>
<div style="position:absolute;left:807px;top:569px;width:3px;height:1px;background:#8a8a8a"></div>
<div style="position:absolute;left:811px;top:569px;width:3px;height:1px;background:#8a8a8a"></div>
<div style="position:absolute;left:815px;top:569px;width:3px;height:1px;background:#8a8a8a"></div>
<svg style="position:absolute;left:1004px;top:563.5px;" width="12" height="12" viewBox="0 0 12 12" fill="none"><circle cx="7.3" cy="4.6" r="3.6" stroke="#616161" stroke-width="1" fill="none"/><path d="M4.7 7.2 L0.8 11.1" stroke="#616161" stroke-width="1"/></svg>
<div style="position:absolute;left:868.2px;top:77px;width:198.5px;height:211px;background:#fff;border-radius:4px;box-shadow:0 0 2px rgba(0,0,0,0.14),0 4px 8px rgba(0,0,0,0.16)"></div>
<svg style="position:absolute;left:879.5px;top:86px;" width="13" height="13" viewBox="0 0 13 13" fill="none"><path d="M4.6 2.2 A5.2 5.2 0 0 0 0.9 7.5 M7.4 2.2 A5.2 5.2 0 0 1 11.1 7.5" stroke="#424242" stroke-width="1.1" fill="none"/><path d="M2.6 1.2 L4.9 1.6 L4.3 3.9" stroke="#424242" stroke-width="1.1" fill="none"/></svg>
<div class="t" style="left:897.30px;top:88px;font-size:11px;font-weight:400;color:#242424;transform:scaleX(0.9000);transform-origin:0 0;">Refresh</div>
<div style="position:absolute;left:871px;top:105px;width:193.6px;height:28px;background:#f0f0f0;border-radius:3px"></div>
<svg style="position:absolute;left:879.2px;top:111.8px;" width="14" height="14" viewBox="0 0 14 14" fill="none"><circle cx="4" cy="4.4" r="3.4" stroke="#424242" stroke-width="1.1" fill="none"/><circle cx="3.3" cy="3.6" r="0.75" fill="#424242"/><path d="M6.6 7 L11.2 11.4" stroke="#424242" stroke-width="3.1" stroke-linecap="round"/><path d="M6.6 7 L11.2 11.4" stroke="#f0f0f0" stroke-width="1" stroke-linecap="round"/><circle cx="4" cy="4.4" r="2.85" fill="#f0f0f0"/><circle cx="3.3" cy="3.6" r="0.75" fill="#424242"/></svg>
<div class="t" style="left:896.90px;top:114px;font-size:11px;font-weight:400;color:#242424;transform:scaleX(0.8729);transform-origin:0 0;">Check Access</div>
<svg style="position:absolute;left:882.5px;top:138.5px;" width="7" height="12" viewBox="0 0 7 12" fill="none"><path d="M0.6 0.6 H6.2 M3.4 0.6 V6.5 M1.6 4.6 L3.4 6.6 L5.2 4.6 M0.8 8.2 H6 V11.2 H0.8 Z" stroke="#424242" stroke-width="1" fill="none"/></svg>
<div class="t" style="left:896.90px;top:139px;font-size:11px;font-weight:400;color:#242424;transform:scaleX(0.8738);transform-origin:0 0;">Sequences</div>
<div style="position:absolute;left:1038.6px;top:138.5px;width:1px;height:14.5px;background:#e0e0e0"></div>
<svg style="position:absolute;left:1049px;top:139.3px;" width="7" height="11" viewBox="0 0 7 11" fill="none"><path d="M1 0.8 L5.8 5.5 L1 10.2" stroke="#616161" stroke-width="1" fill="none"/></svg>
<svg style="position:absolute;left:880px;top:164px;" width="13" height="11.5" viewBox="0 0 13 11.5" fill="none"><rect x="0.6" y="0.6" width="5.4" height="4.6" stroke="#424242" stroke-width="1" fill="none"/><rect x="0.6" y="6.4" width="5.4" height="4.6" stroke="#424242" stroke-width="1" fill="none"/><path d="M8.3 0.8 H11.6 V8.6 H8.6 M9.8 7.2 L8.4 8.6 L9.8 10" stroke="#2f7fd0" stroke-width="1" fill="none"/></svg>
<div class="t" style="left:896.90px;top:165px;font-size:11px;font-weight:400;color:#242424;transform:scaleX(0.8583);transform-origin:0 0;">Process</div>
<svg style="position:absolute;left:1046px;top:165.2px;" width="7" height="11" viewBox="0 0 7 11" fill="none"><path d="M1 0.8 L5.8 5.5 L1 10.2" stroke="#616161" stroke-width="1" fill="none"/></svg>
<svg style="position:absolute;left:879.8px;top:189.8px;" width="12.5" height="12.5" viewBox="0 0 12.5 12.5" fill="none"><path d="M6.2 0.8 L7.7 4.6 L11.7 4.8 L8.6 7.3 L9.7 11.3 L6.2 9 L2.7 11.3 L3.8 7.3 L0.7 4.8 L4.7 4.6 Z" stroke="#424242" stroke-width="1" fill="none" stroke-linejoin="round"/></svg>
<div class="t" style="left:897.00px;top:191px;font-size:11px;font-weight:400;color:#242424;transform:scaleX(0.9176);transform-origin:0 0;">Follow</div>
<svg style="position:absolute;left:879.5px;top:216.3px;" width="13" height="10" viewBox="0 0 13 10" fill="none"><path d="M0.8 0.8 H8 L12 5 L8 9.2 H0.8 L4.8 5 Z M3 9 L8.5 3.2 M6 9 L10 4.8" stroke="#424242" stroke-width="1" fill="none" stroke-linejoin="round"/></svg>
<div class="t" style="left:897.00px;top:217px;font-size:11px;font-weight:400;color:#242424;transform:scaleX(0.8773);transform-origin:0 0;">Flow</div>
<svg style="position:absolute;left:1046px;top:216.8px;" width="7" height="11" viewBox="0 0 7 11" fill="none"><path d="M1 0.8 L5.8 5.5 L1 10.2" stroke="#616161" stroke-width="1" fill="none"/></svg>
<svg style="position:absolute;left:879.5px;top:241.5px;" width="13" height="11.5" viewBox="0 0 13 11.5" fill="none"><path d="M3.6 0.8 H12 V10.8 H3.6 M6.5 3.4 H11 M6.5 5.6 H11 M6.5 7.8 H11" stroke="#424242" stroke-width="1" fill="none"/><rect x="0.6" y="3" width="5.4" height="5.4" fill="#fff" stroke="#424242" stroke-width="1"/><path d="M1.6 4.2 L2.4 7.2 L3.3 5.2 L4.2 7.2 L5 4.2" stroke="#424242" stroke-width="0.7" fill="none"/></svg>
<div class="t" style="left:897.00px;top:243px;font-size:11px;font-weight:400;color:#242424;transform:scaleX(0.9231);transform-origin:0 0;">Word Templates</div>
<svg style="position:absolute;left:1046px;top:242.6px;" width="7" height="11" viewBox="0 0 7 11" fill="none"><path d="M1 0.8 L5.8 5.5 L1 10.2" stroke="#616161" stroke-width="1" fill="none"/></svg>
<svg style="position:absolute;left:879.8px;top:266.8px;" width="11.5" height="12" viewBox="0 0 11.5 12" fill="none"><path d="M2.2 0.8 H10.6 V11.2 H2.2 M0.8 2.5 V3.5 M0.8 5.5 V6.5 M0.8 8.5 V9.5" stroke="#424242" stroke-width="1" fill="none"/><path d="M4.3 9.2 V6.6 M6.3 9.2 V3.8 M8.3 9.2 V5.5" stroke="#424242" stroke-width="1" fill="none"/></svg>
<div class="t" style="left:897.00px;top:269px;font-size:11px;font-weight:400;color:#242424;transform:scaleX(0.8995);transform-origin:0 0;">Run Report</div>
<svg style="position:absolute;left:1046px;top:268.5px;" width="7" height="11" viewBox="0 0 7 11" fill="none"><path d="M1 0.8 L5.8 5.5 L1 10.2" stroke="#616161" stroke-width="1" fill="none"/></svg>
<div style="position:absolute;left:1041px;top:289px;width:4px;height:1px;background:#888"></div>
<div style="position:absolute;left:861.3px;top:94px;width:212px;height:44.6px;border:7.7px solid #e41e1e;box-sizing:border-box"></div>
</body></html>
